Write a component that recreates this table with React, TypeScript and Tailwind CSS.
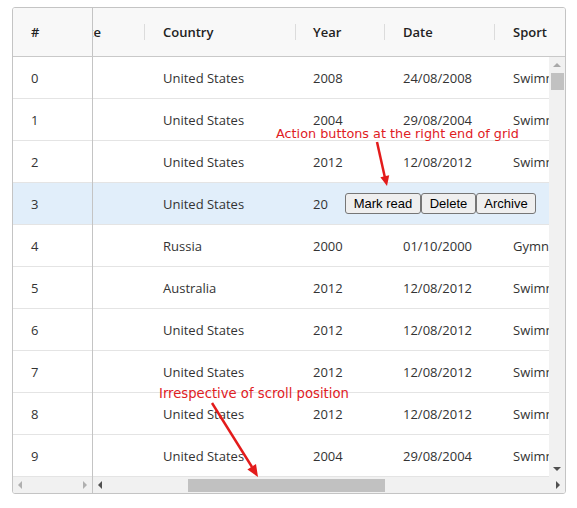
const rows = [
  { id: 0, country: 'United States', year: '2008', date: '24/08/2008', sport: 'Swimming' },
  { id: 1, country: 'United States', year: '2004', date: '29/08/2004', sport: 'Swimming' },
  { id: 2, country: 'United States', year: '2012', date: '12/08/2012', sport: 'Swimming' },
  { id: 3, country: 'United States', year: '2012', date: '12/08/2012', sport: 'Swimming' },
  { id: 4, country: 'Russia', year: '2000', date: '01/10/2000', sport: 'Gymnastics' },
  { id: 5, country: 'Australia', year: '2012', date: '12/08/2012', sport: 'Swimming' },
  { id: 6, country: 'United States', year: '2012', date: '12/08/2012', sport: 'Swimming' },
  { id: 7, country: 'United States', year: '2012', date: '12/08/2012', sport: 'Swimming' },
  { id: 8, country: 'United States', year: '2012', date: '12/08/2012', sport: 'Swimming' },
  { id: 9, country: 'United States', year: '2004', date: '29/08/2004', sport: 'Swimming' },
];

const Tri = ({ dir, color }: { dir: 'up' | 'down' | 'left' | 'right'; color: string }) => {
  const pts = {
    up: '0,6 4,2 8,6',
    down: '0,2 4,6 8,2',
    left: '5,0 1,4 5,8',
    right: '3,0 7,4 3,8',
  }[dir];
  return (
    <svg width="8" height="8" viewBox="0 0 8 8">
      <polygon points={pts} fill={color} />
    </svg>
  );
};

const Sep = () => <div className="w-px h-[16px] bg-[#dcdcdc] shrink-0 -mt-[2px]" />;

const App = () => {
  return (
    <div className="min-h-screen bg-white relative font-['Open_Sans',sans-serif] text-[13px] text-[#333]">
      <div className="pt-[7px] pl-[12px]">
        <div className="w-[554px] h-[487px] border border-[#c4c4c4] rounded-[3px] flex flex-col overflow-hidden">
          {/* Header */}
          <div className="h-[49px] flex border-b border-[#c9c9c9] bg-[#f8f8f8] font-semibold text-[#222] shrink-0 pt-[2px]">
            <div className="w-[80px] border-r border-[#c4c4c4] -mt-[2px] pt-[2px] pl-[18px] flex items-center">#</div>
            <div className="flex-1 flex overflow-hidden">
              <div className="w-[52px] shrink-0 flex items-center">
                <div className="flex-1 overflow-hidden flex justify-end">
                  <span className="whitespace-nowrap pr-[43px]">Athlete</span>
                </div>
                <Sep />
              </div>
              <div className="w-[151px] shrink-0 flex items-center pl-[18px]">
                <span className="flex-1">Country</span>
                <Sep />
              </div>
              <div className="w-[89px] shrink-0 flex items-center pl-[17px]">
                <span className="flex-1">Year</span>
                <Sep />
              </div>
              <div className="w-[110px] shrink-0 flex items-center pl-[18px]">
                <span className="flex-1">Date</span>
                <Sep />
              </div>
              <div className="w-[120px] shrink-0 flex items-center pl-[18px]">
                <span className="flex-1">Sport</span>
              </div>
            </div>
          </div>

          {/* Body */}
          <div className="h-[420px] flex shrink-0">
            <div className="w-[80px] border-r border-[#c4c4c4] flex flex-col">
              {rows.map((r) => (
                <div
                  key={r.id}
                  className={`h-[42px] shrink-0 flex items-center pl-[18px] pt-[3px] border-b border-[#e4e4e4] ${r.id === 3 ? 'bg-[#e1eefa]' : 'bg-white'}`}
                >
                  {r.id}
                </div>
              ))}
            </div>
            <div className="flex-1 flex flex-col overflow-hidden">
              {rows.map((r) => (
                <div
                  key={r.id}
                  className={`relative h-[42px] shrink-0 flex items-center pt-[3px] border-b border-[#e4e4e4] whitespace-nowrap ${r.id === 3 ? 'bg-[#e1eefa]' : 'bg-white'}`}
                >
                  <div className="w-[52px] shrink-0" />
                  <div className="w-[151px] shrink-0 pl-[18px]">{r.country}</div>
                  <div className="w-[89px] shrink-0 pl-[17px]">{r.year}</div>
                  <div className="w-[110px] shrink-0 pl-[18px]">{r.date}</div>
                  <div className="w-[120px] shrink-0 pl-[18px]">{r.sport}</div>
                  {r.id === 3 && (
                    <div className="absolute right-0 inset-y-0 flex items-center pl-[16px] pr-[13px] bg-[#e1eefa] font-['Liberation_Sans',sans-serif] text-[13px] text-black">
                      <button className="w-[76px] h-[21px] border border-[#767676] rounded-[3px] bg-[#efefef]">Mark read</button>
                      <button className="w-[55px] h-[21px] border border-[#767676] rounded-[3px] bg-[#efefef]">Delete</button>
                      <button className="w-[60px] h-[21px] border border-[#767676] rounded-[3px] bg-[#efefef]">Archive</button>
                    </div>
                  )}
                </div>
              ))}
            </div>
            <div className="w-[16px] bg-[#f1f1f1] flex flex-col items-center">
              <div className="h-[16px] flex items-center justify-center">
                <Tri dir="up" color="#a8a8a8" />
              </div>
              <div className="w-[13px] h-[17px] bg-[#c1c1c1]" />
              <div className="flex-1" />
              <div className="h-[17px] flex items-center justify-center">
                <Tri dir="down" color="#505050" />
              </div>
            </div>
          </div>

          {/* Horizontal scrollbar */}
          <div className="h-[16px] flex bg-[#f1f1f1] shrink-0">
            <div className="w-[80px] border-r border-[#c4c4c4] flex items-center justify-between px-[4px]">
              <Tri dir="left" color="#b0b0b0" />
              <Tri dir="right" color="#b0b0b0" />
            </div>
            <div className="w-[16px] flex items-center justify-center">
              <Tri dir="left" color="#505050" />
            </div>
            <div className="flex-1 flex items-center">
              <div className="ml-[79px] w-[197px] h-[13px] bg-[#c1c1c1]" />
            </div>
            <div className="w-[16px] flex items-center justify-center">
              <Tri dir="right" color="#505050" />
            </div>
          </div>
        </div>
      </div>

      {/* Annotations */}
      <div className="absolute left-[276px] top-[125px] font-['DejaVu_Sans',sans-serif] text-[12.8px] leading-[18px] text-[#e0201f] whitespace-nowrap">
        Action buttons at the right end of grid
      </div>
      <div className="absolute left-[159px] top-[385px] font-['DejaVu_Sans',sans-serif] text-[13.2px] leading-[18px] text-[#e0201f] whitespace-nowrap">
        Irrespective of scroll position
      </div>
      <svg className="absolute left-0 top-0 pointer-events-none" width="577" height="508" viewBox="0 0 577 508">
        <line x1="377" y1="142" x2="384.8" y2="177" stroke="#e31b1b" strokeWidth="2.5" />
        <polygon points="387,186 389.2,175.2 380.4,177.2" fill="#e31b1b" />
        <line x1="212" y1="403" x2="252" y2="467" stroke="#e31b1b" strokeWidth="2.5" />
        <polygon points="258,477 256,464 247.4,469.4" fill="#e31b1b" />
      </svg>
    </div>
  );
};

export default App;
